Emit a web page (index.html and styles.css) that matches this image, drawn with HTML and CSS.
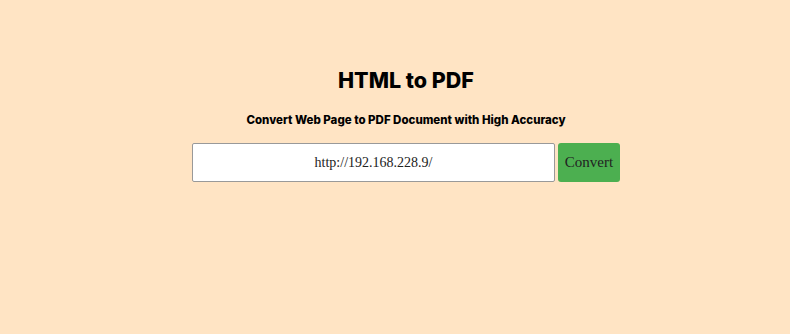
FILE: index.html
```html
<!DOCTYPE html>
<html lang="en">

<head>
  <meta charset="UTF-8" />
  <meta name="viewport" content="width=device-width, initial-scale=1.0" />
  <title>HTML to PDF</title>
  <link rel="stylesheet" href="styles.css">
</head>

<body>
  <div class="container">
    <h1>HTML to PDF</h1>
    <p class="subtitle">Convert Web Page to PDF Document with High Accuracy</p>
    <form class="convert-form">
      <input type="text" class="url-input" value="http://192.168.228.9/">
      <button type="submit" class="button">Convert</button>
    </form>
  </div>
</body>

</html>
```

FILE: styles.css
```css
body {
  margin: 0;
  background: #ffe4c4;
  font-family: Inter, "Open Sans", sans-serif;
  color: #000;
}

.container {
  padding: 67px 0 0 22px;
  text-align: center;
}

h1 {
  font-size: 21.5px;
  font-weight: 800;
  margin: 0 0 20px;
}

.subtitle {
  font-size: 11.5px;
  font-weight: 800;
  margin: 0 0 16px;
}

.convert-form {
  display: flex;
  justify-content: center;
  align-items: flex-start;
  gap: 3px;
}

.url-input {
  width: 363px;
  height: 39px;
  box-sizing: border-box;
  border: 1px solid #999;
  border-radius: 2px;
  background: white;
  text-align: center;
  font-family: "Liberation Serif", serif;
  font-size: 14px;
  color: #222;
  padding: 0 8px;
}

.button {
  height: 39px;
  width: 62px;
  background: #4caf50;
  border: none;
  border-radius: 3px;
  font-family: "Liberation Serif", serif;
  font-size: 15px;
  color: #222;
  padding: 0;
}
```
